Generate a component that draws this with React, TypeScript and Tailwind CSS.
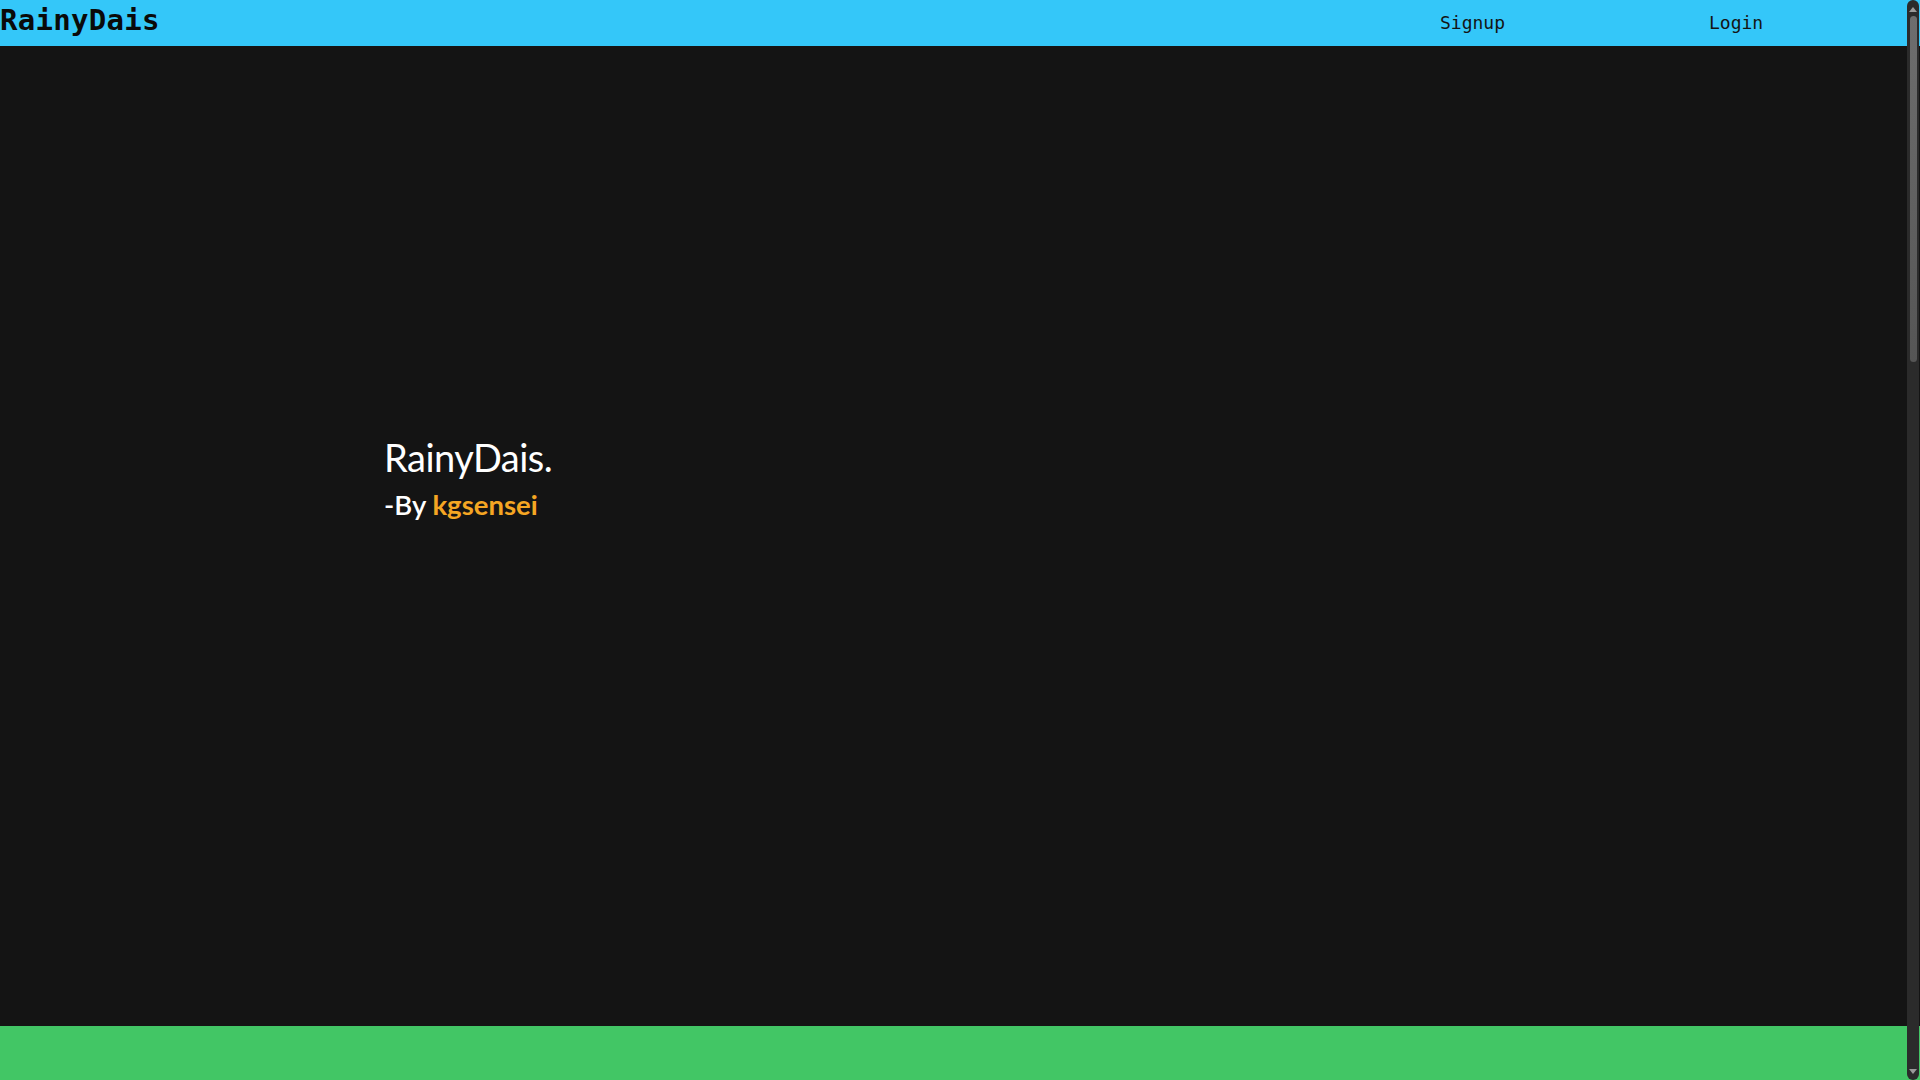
export default function App() {
  return (
    <div className="relative w-full h-[1080px] overflow-hidden bg-[#141414] flex flex-col">
      <header className="h-[46px] shrink-0 bg-[#34c7f9] flex items-center pr-[13px]">
        <div
          className="text-[29px] font-bold text-[#0a0a0a] leading-none -mt-[6px] tracking-[0.3px]"
          style={{ fontFamily: '"DejaVu Sans Mono", "Liberation Mono", monospace' }}
        >
          RainyDais
        </div>
        <div className="flex-1" />
        <nav
          className="flex items-center text-[18px] text-[#141414] leading-none"
          style={{ fontFamily: '"DejaVu Sans Mono", "Liberation Mono", monospace' }}
        >
          <a className="w-[269px] block cursor-pointer">Signup</a>
          <a className="w-[198px] block cursor-pointer">Login</a>
        </nav>
      </header>
      <main
        className="h-[980px] shrink-0 bg-[#141414] pl-[384px] pt-[387px]"
        style={{ fontFamily: 'Lato, "Open Sans", sans-serif' }}
      >
        <h1 className="text-[38px] text-white leading-[48px] tracking-[-0.5px]">RainyDais.</h1>
        <p className="text-[27.5px] text-white leading-[48px] font-semibold">
          -By <span className="text-[#f5a623] font-bold">kgsensei</span>
        </p>
      </main>
      <footer className="flex-1 bg-[#42c665]" />

      {/* browser scrollbar */}
      <div className="absolute top-0 right-[1px] w-[12px] h-[1080px] bg-[#2b2b2b] rounded-full flex flex-col items-center">
        <div className="h-[16px] w-full flex items-center justify-center pt-[2px]">
          <div className="w-0 h-0 border-l-[4px] border-r-[4px] border-b-[5px] border-l-transparent border-r-transparent border-b-[#9a9a9a]" />
        </div>
        <div className="w-[7px] h-[346px] rounded-full bg-gradient-to-b from-[#6e6e6e] to-[#555555]" />
        <div className="flex-1" />
        <div className="h-[16px] w-full flex items-center justify-center pb-[2px]">
          <div className="w-0 h-0 border-l-[4px] border-r-[4px] border-t-[5px] border-l-transparent border-r-transparent border-t-[#9a9a9a]" />
        </div>
      </div>
    </div>
  );
}
